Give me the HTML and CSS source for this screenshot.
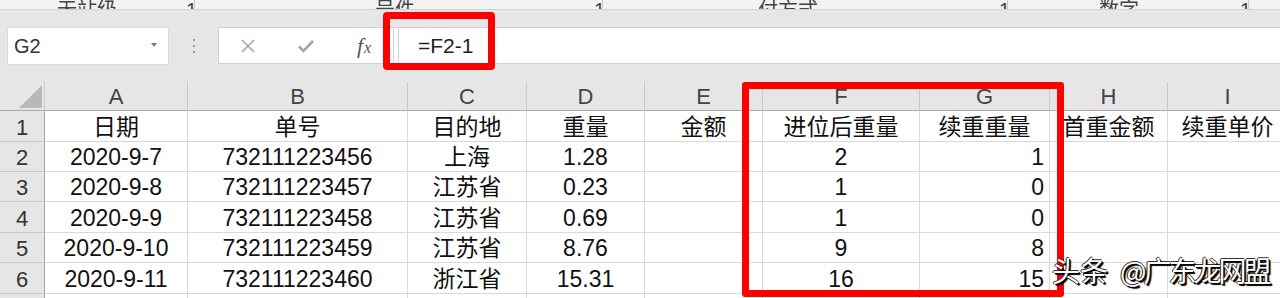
FILE: index.html
```html
<!DOCTYPE html>
<html lang="zh-CN">
<head>
    <meta charset="UTF-8">
    <meta name="viewport" content="width=device-width, initial-scale=1.0">
    <title>Excel - 续重重量</title>
    <link rel="stylesheet" href="styles.css">
</head>
<body>
<div class="page">
    <div class="ribbon-tail">
        <span></span>
        <span class="rt-item">无站级</span>
        <span class="rt-item rt-drop">1</span>
        <span class="rt-item">号件</span>
        <span class="rt-item rt-drop">1</span>
        <span class="rt-item">付方式</span>
        <span class="rt-item rt-drop">1</span>
        <span class="rt-item">数字</span>
        <span class="rt-item rt-drop">1</span>
    </div>

    <div class="toolbar">
        <div class="name-box">
            <span class="name-text">G2</span>
            <span class="name-arrow"></span>
        </div>
        <div class="grip">
            <span class="dot"></span>
            <span class="dot"></span>
            <span class="dot"></span>
        </div>
        <div class="formula-bar">
            <div class="fx-buttons">
                <span class="fx-btn">
                    <svg width="16" height="16" viewBox="0 0 16 16"><path d="M2 2 L14 14 M14 2 L2 14" stroke="#a6a6a6" stroke-width="1.6" fill="none"/></svg>
                </span>
                <span class="fx-btn">
                    <svg width="18" height="16" viewBox="0 0 18 16"><path d="M2 8.5 L6.5 13 L16 3" stroke="#a6a6a6" stroke-width="2.6" fill="none"/></svg>
                </span>
                <span class="fx-btn fx-label"><i>f</i><i class="fx-x">x</i></span>
            </div>
            <div class="fx-split"></div>
            <div class="formula-input">=F2-1</div>
        </div>
    </div>

    <div class="sheet">
        <div class="hd corner"><span class="corner-tri"></span></div>
        <div class="hd col">A</div>
        <div class="hd col">B</div>
        <div class="hd col">C</div>
        <div class="hd col">D</div>
        <div class="hd col">E</div>
        <div class="hd col">F</div>
        <div class="hd col">G</div>
        <div class="hd col">H</div>
        <div class="hd col">I</div>

        <div class="hd row">1</div>
        <div class="cell">日期</div>
        <div class="cell">单号</div>
        <div class="cell">目的地</div>
        <div class="cell">重量</div>
        <div class="cell">金额</div>
        <div class="cell">进位后重量</div>
        <div class="cell">续重重量</div>
        <div class="cell">首重金额</div>
        <div class="cell">续重单价</div>

        <div class="hd row">2</div>
        <div class="cell">2020-9-7</div>
        <div class="cell">732111223456</div>
        <div class="cell">上海</div>
        <div class="cell">1.28</div>
        <div class="cell"></div>
        <div class="cell">2</div>
        <div class="cell num">1</div>
        <div class="cell"></div>
        <div class="cell"></div>

        <div class="hd row">3</div>
        <div class="cell">2020-9-8</div>
        <div class="cell">732111223457</div>
        <div class="cell">江苏省</div>
        <div class="cell">0.23</div>
        <div class="cell"></div>
        <div class="cell">1</div>
        <div class="cell num">0</div>
        <div class="cell"></div>
        <div class="cell"></div>

        <div class="hd row">4</div>
        <div class="cell">2020-9-9</div>
        <div class="cell">732111223458</div>
        <div class="cell">江苏省</div>
        <div class="cell">0.69</div>
        <div class="cell"></div>
        <div class="cell">1</div>
        <div class="cell num">0</div>
        <div class="cell"></div>
        <div class="cell"></div>

        <div class="hd row">5</div>
        <div class="cell">2020-9-10</div>
        <div class="cell">732111223459</div>
        <div class="cell">江苏省</div>
        <div class="cell">8.76</div>
        <div class="cell"></div>
        <div class="cell">9</div>
        <div class="cell num">8</div>
        <div class="cell"></div>
        <div class="cell"></div>

        <div class="hd row">6</div>
        <div class="cell">2020-9-11</div>
        <div class="cell">732111223460</div>
        <div class="cell">浙江省</div>
        <div class="cell">15.31</div>
        <div class="cell"></div>
        <div class="cell">16</div>
        <div class="cell num">15</div>
        <div class="cell"></div>
        <div class="cell"></div>

        <div class="hd row"></div>
        <div class="cell"></div>
        <div class="cell"></div>
        <div class="cell"></div>
        <div class="cell"></div>
        <div class="cell"></div>
        <div class="cell"></div>
        <div class="cell"></div>
        <div class="cell"></div>
        <div class="cell"></div>
    </div>

    <!-- annotations drawn over the screenshot -->
    <div class="mark mark-formula"></div>
    <div class="mark mark-cols"></div>
    <div class="watermark"><span>头条</span><span class="wm-at">@广东龙网盟</span></div>
</div>
</body>
</html>
```

FILE: styles.css
```css
html, body {
    margin: 0;
    padding: 0;
}

body {
    width: 1280px;
    height: 298px;
    overflow: hidden;
    background-color: #e6e6e6;
    font-family: "Liberation Sans", "Noto Sans CJK SC", sans-serif;
    color: #1a1a1a;
}

.page {
    position: relative;
    width: 1280px;
    height: 298px;
    overflow: hidden;
}

/* bottom of the ribbon, mostly cut off */
.ribbon-tail {
    height: 9px;
    border-bottom: 1px solid #d2d2d2;
    background-color: #f3f3f3;
    display: grid;
    grid-template-columns: 57px 129px 189px 219px 164px 241px 100px 141px 40px;
    align-items: end;
    overflow: hidden;
}

.rt-item {
    font-size: 20px;
    line-height: 20px;
    height: 20px;
    margin-bottom: 3px;
    color: #444;
    white-space: nowrap;
}

.rt-drop {
    border-right: 1px solid #c8c8c8;
    width: 8px;
}

/* name box + formula bar */
.toolbar {
    height: 72px;
    box-sizing: border-box;
    padding: 17px 0 0 7px;
    display: flex;
    align-items: flex-start;
}

.name-box {
    width: 162px;
    height: 38px;
    box-sizing: border-box;
    background-color: #fff;
    border: 1px solid #dadada;
    display: flex;
    align-items: center;
    justify-content: space-between;
    padding: 0 11px 0 6px;
}

.name-text {
    font-size: 20px;
    color: #333;
}

.name-arrow {
    width: 0;
    height: 0;
    border-left: 3px solid transparent;
    border-right: 3px solid transparent;
    border-top: 4px solid #777;
    margin-top: -2px;
}

.grip {
    width: 49px;
    height: 38px;
    display: flex;
    flex-direction: column;
    align-items: center;
    justify-content: center;
    gap: 4px;
}

.dot {
    width: 2px;
    height: 2px;
    background-color: #9c9c9c;
}

.formula-bar {
    flex: 1;
    height: 37px;
    box-sizing: border-box;
    background-color: #fff;
    border: 1px solid #d2d2d2;
    border-right: none;
    display: flex;
    align-items: stretch;
}

.fx-buttons {
    width: 174px;
    display: flex;
}

.fx-btn {
    width: 58px;
    display: flex;
    align-items: center;
    justify-content: center;
}

.fx-label {
    font-family: "Liberation Serif", serif;
    font-size: 22px;
    color: #555;
}

.fx-x {
    font-size: 16px;
    margin-left: 1px;
    margin-top: 5px;
}

.fx-split {
    width: 4px;
    border-left: 1px solid #d4d4d4;
    border-right: 1px solid #d4d4d4;
    margin-top: -1px;
}

.formula-input {
    flex: 1;
    padding-left: 19px;
    font-size: 21px;
    line-height: 35px;
    color: #222;
}

/* the worksheet grid */
.sheet {
    display: grid;
    grid-template-columns: 45px 143px 220px 119px 118px 118px 157px 130px 118px 120px;
    grid-template-rows: 29px 31px 30px 30px 31px 30px 31px 20px;
    background-color: #fff;
}

.hd {
    background-color: #e6e6e6;
    color: #444;
    font-size: 22px;
    box-sizing: border-box;
    display: flex;
    align-items: flex-end;
    justify-content: center;
    line-height: 22px;
    padding-bottom: 2px;
}

.hd.col {
    border-right: 1px solid #c9c9c9;
    border-bottom: 1px solid #a9a9a9;
}

.hd.row {
    border-right: 1px solid #a9a9a9;
    border-bottom: 1px solid #c9c9c9;
    color: #333;
}

.hd.corner {
    border-right: 1px solid #c9c9c9;
    border-bottom: 1px solid #a9a9a9;
    position: relative;
}

.corner-tri {
    position: absolute;
    right: 2px;
    bottom: 2px;
    width: 23px;
    height: 23px;
    background-color: #b8b8b8;
    clip-path: polygon(100% 0, 100% 100%, 0 100%);
}

.cell {
    box-sizing: border-box;
    border-right: 1px solid #d9d9d9;
    border-bottom: 1px solid #d9d9d9;
    font-size: 23px;
    line-height: 23px;
    color: #111;
    display: flex;
    align-items: flex-end;
    justify-content: center;
    padding-bottom: 2px;
    white-space: nowrap;
    overflow: hidden;
}

.cell.num {
    justify-content: flex-end;
    padding-right: 5px;
}

/* red annotation rectangles */
.mark {
    position: absolute;
    box-sizing: border-box;
    border: 7px solid #ff0000;
    border-radius: 4px;
}

.mark-formula {
    left: 383px;
    top: 12px;
    width: 112px;
    height: 58px;
}

.mark-cols {
    left: 742px;
    top: 82px;
    width: 322px;
    height: 215px;
    border-radius: 3px;
}

.watermark {
    position: absolute;
    left: 1052px;
    top: 252px;
    font-family: "Noto Sans CJK SC", sans-serif;
    font-size: 28px;
    line-height: 36px;
    color: #fff;
    white-space: nowrap;
    text-shadow: -1px 0 0 #222, 1px 1px 0 #000, 2px 2px 1px #000, 0 -1px 0 #333;
}

.wm-at {
    margin-left: 12px;
    letter-spacing: -3px;
}
```
